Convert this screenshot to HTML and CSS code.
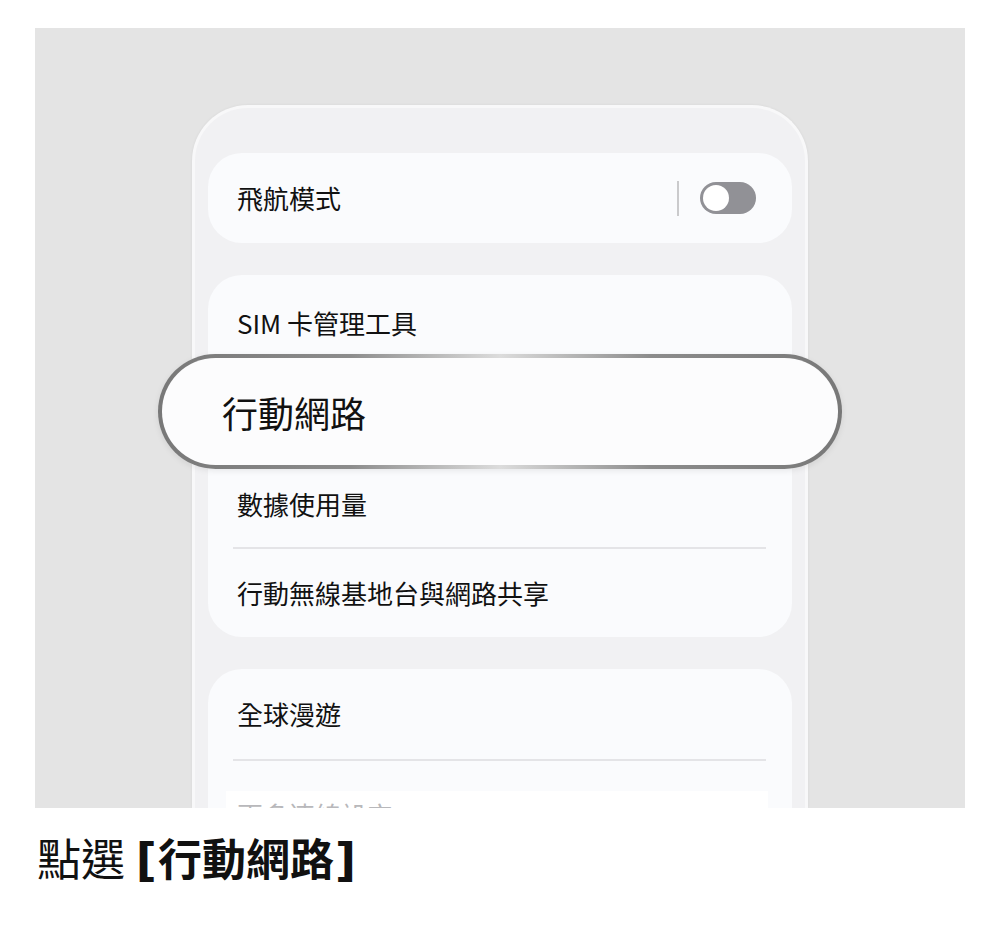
FILE: index.html
```html
<!DOCTYPE html>
<html lang="zh-Hant">
<head>
    <meta charset="UTF-8">
    <meta name="viewport" content="width=device-width, initial-scale=1.0">
    <title>點選行動網路</title>
    <link rel="stylesheet" href="styles.css">
</head>
<body>
    <div class="page">
        <div class="stage">
            <div class="phone">
                <div class="card card-single">
                    <div class="row row-toggle">
                        <span class="label">飛航模式</span>
                        <div class="switch-wrap">
                            <span class="switch-sep"></span>
                            <span class="switch"><span class="knob"></span></span>
                        </div>
                    </div>
                </div>

                <div class="card">
                    <div class="row row-first"><span class="label">SIM 卡管理工具</span></div>
                    <div class="row row-focus"><span class="label">行動網路</span></div>
                    <div class="row row-after"><span class="label">數據使用量</span></div>
                    <div class="divider"></div>
                    <div class="row row-last"><span class="label">行動無線基地台與網路共享</span></div>
                </div>

                <div class="card">
                    <div class="row row-single"><span class="label">全球漫遊</span></div>
                    <div class="divider"></div>
                    <div class="row row-faded"><span class="label">更多連線設定</span></div>
                </div>
            </div>
        </div>

        <p class="caption">點選 <strong><span class="bracket">[</span>行動網路<span class="bracket">]</span></strong></p>
    </div>
</body>
</html>
```

FILE: styles.css
```css
body {
    margin: 0;
    background: #fff;
    font-family: "Noto Sans CJK TC", "Noto Sans", sans-serif;
    color: #111;
}
.page {
    padding: 28px 35px 0;
}
.stage {
    height: 780px;
    background: #e4e4e4;
    overflow: hidden;
    display: flex;
    justify-content: center;
    padding-top: 77px;
    box-sizing: border-box;
}
.phone {
    width: 616px;
    box-sizing: border-box;
    background: #f1f1f3;
    border: 3px solid #f8f8f9;
    border-bottom: none;
    border-radius: 56px 56px 0 0;
    box-shadow: 0 0 3px rgba(0, 0, 0, 0.06);
    padding: 45px 13px 0;
    display: flex;
    flex-direction: column;
    gap: 32px;
}
.card {
    background: #fafbfd;
    border-radius: 34px;
    display: flex;
    flex-direction: column;
}
.row {
    display: flex;
    align-items: center;
    padding: 0 29px;
}
.label {
    font-size: 26px;
    line-height: 1;
}
.row-toggle {
    height: 90px;
    justify-content: space-between;
    padding-right: 36px;
}
.switch-wrap {
    display: flex;
    align-items: center;
    gap: 21px;
}
.switch-sep {
    width: 2px;
    height: 35px;
    background: #cacacc;
}
.switch {
    width: 56px;
    height: 32px;
    border-radius: 16px;
    background: #919196;
    display: flex;
    align-items: center;
    padding-left: 3px;
    box-sizing: border-box;
}
.knob {
    width: 26px;
    height: 26px;
    border-radius: 50%;
    background: #fff;
}
.row-first {
    height: 79px;
    padding-top: 16px;
    box-sizing: border-box;
}
.row-focus {
    height: 115px;
    margin: 0 -50px;
    padding-left: 60px;
    box-sizing: border-box;
    border: 4px solid transparent;
    border-radius: 58px;
    background:
        linear-gradient(#fcfcfd, #fcfcfd) padding-box,
        linear-gradient(90deg, #787878 0%, #8c8c8c 28%, #dcdcdc 50%, #8c8c8c 72%, #787878 100%) border-box;
    box-shadow: 0 2px 6px rgba(0, 0, 0, 0.08);
    position: relative;
}
.row-focus .label {
    font-size: 36px;
}
.row-after {
    height: 78px;
    padding-bottom: 8px;
    box-sizing: border-box;
}
.divider {
    height: 2px;
    background: #e4e4e7;
    margin: 0 26px 0 25px;
}
.row-last {
    height: 88px;
}
.row-single {
    height: 90px;
}
/* next row is mostly below the fold, only its top edge shows */
.row-faded {
    height: 80px;
    margin: 30px 24px 0 18px;
    padding-left: 11px;
    background: #fff;
    align-items: flex-start;
    padding-top: 11px;
    box-sizing: border-box;
}
.row-faded .label {
    color: #b8b8bb;
}
.caption {
    margin: 27px 0 0 2px;
    font-size: 44px;
    line-height: 1;
}
.caption strong {
    font-weight: 700;
}
.bracket {
    font-family: "DejaVu Sans", sans-serif;
    font-size: 46px;
    margin: 0 1px;
}
```
